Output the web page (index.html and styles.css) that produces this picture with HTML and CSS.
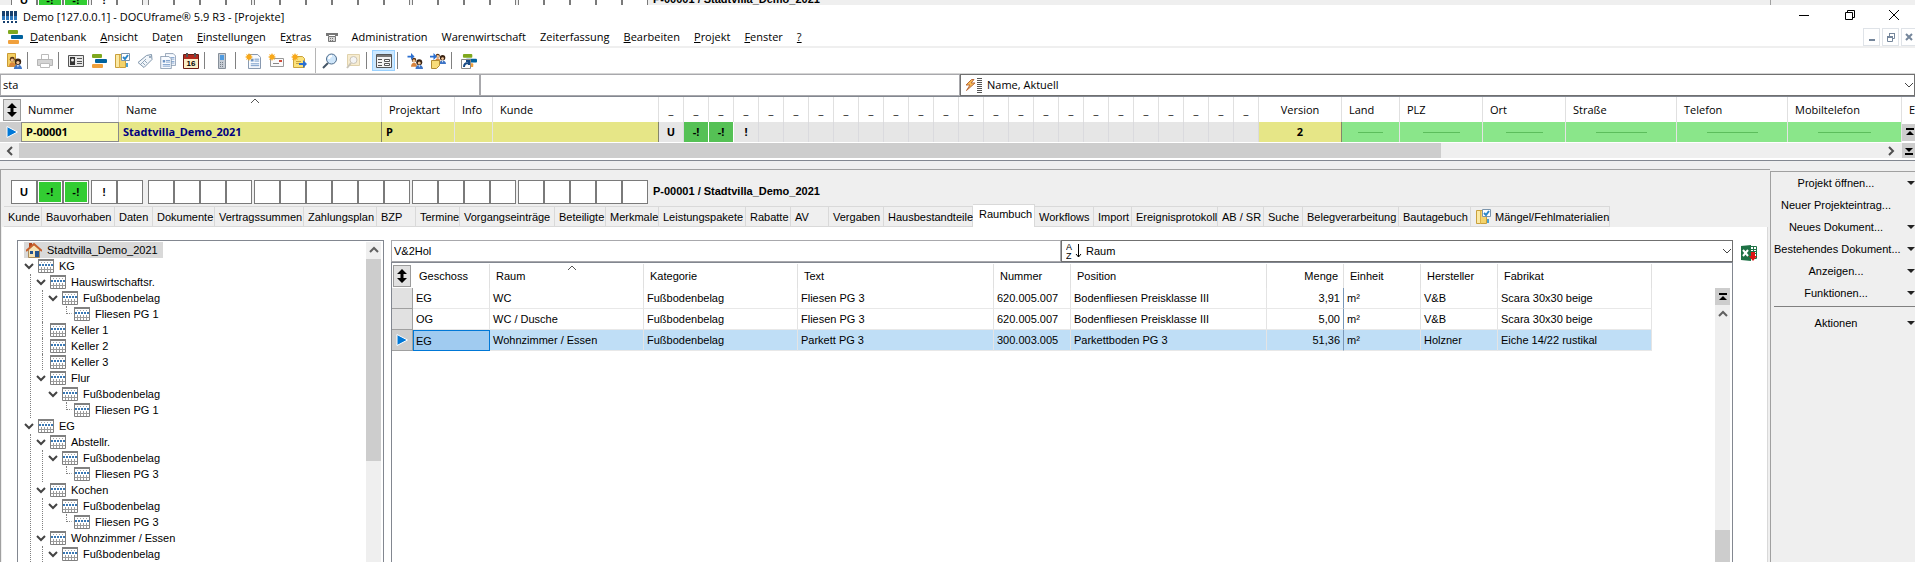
FILE: index.html
```
<!DOCTYPE html>
<html lang="de">
<head>
  <meta charset="UTF-8" />
  <meta name="viewport" content="width=device-width, initial-scale=1.0" />
  <title>Demo [127.0.0.1] - DOCUframe® 5.9 R3 - [Projekte]</title>
  <link rel="stylesheet" href="styles.css">
</head>
<body>
  <svg class="defs" aria-hidden="true">
    <symbol id="i-grid" viewBox="0 0 16 14">
      <path fill="#fff" d="M0 0h16v14H0z"/>
      <path fill="none" stroke="#a8a8a8" stroke-dasharray="1 2" d="M3 3.5h12M3 8.5h12"/>
      <path stroke="#3a78b4" stroke-width="2" stroke-dasharray="2 1" d="M1 6h14"/>
      <path fill="none" stroke="#9c9c9c" d="M1 10.5h14M3.500 8v5M6.500 8v5M9.500 8v5M12.500 8v5"/>
      <path fill="none" stroke="#808080" d="M.5 .5h15v13H.5z"/>
      <path fill="#808080" d="M0 0h16v2H0z"/>
    </symbol>
    <symbol id="i-down" viewBox="0 0 10 10"><path fill="none" stroke="#444" stroke-width="2" d="M1 3l4 4 4-4"/></symbol>
    <symbol id="i-up" viewBox="0 0 10 10"><path fill="none" stroke="#606060" stroke-width="2" d="M1 7l4-4 4 4"/></symbol>
    <symbol id="i-left" viewBox="0 0 10 10"><path fill="none" stroke="#505050" stroke-width="2" d="M7 1L3 5l4 4"/></symbol>
    <symbol id="i-right" viewBox="0 0 10 10"><path fill="none" stroke="#505050" stroke-width="2" d="M3 1l4 4-4 4"/></symbol>
    <symbol id="i-combo" viewBox="0 0 10 10"><path fill="none" stroke="#444" d="M1 3l4 4 4-4"/></symbol>
    <symbol id="i-sort" viewBox="0 0 10 6"><path fill="none" stroke="#555" d="M1 5l4-4 4 4"/></symbol>
    <symbol id="i-updown" viewBox="0 0 10 14"><path d="M5 0l5 5H6.500v4H10l-5 5-5-5h3.500V5H0z"/></symbol>
    <symbol id="i-current" viewBox="0 0 12 12"><path fill="#0078d7" stroke="#fff" d="M1 .5L11.500 6 1 11.500z"/></symbol>
    <symbol id="i-first" viewBox="0 0 8 8"><path d="M0 0h8v2H0zM4 3l4 4H0z"/></symbol>
    <symbol id="i-last" viewBox="0 0 8 8"><path d="M0 6h8v2H0zM4 5l4-4H0z"/></symbol>
    <symbol id="i-arrow" viewBox="0 0 8 4"><path fill="#222" d="M0 0h8L4 4z"/></symbol>
    <symbol id="i-bars" viewBox="0 0 16 16">
      <rect x="1" y="1" width="10" height="4" rx="1" fill="#7fa81e"/>
      <rect x="4" y="6" width="12" height="4" rx="1" fill="#00629e"/>
      <rect x="1" y="11" width="11" height="4" rx="1" fill="#f0a03c"/>
    </symbol>
    <symbol id="i-folder" viewBox="0 0 16 16">
      <path fill="#f3d36b" stroke="#c9a03c" d="M1.500 1.500h10v13h-10z"/>
      <path fill="#fbe9a4" d="M2 2h3v12H2z"/>
      <path fill="#dcb048" d="M5 2h1v13H5z"/>
      <path fill="#fff" stroke="#7a94ac" d="M7.500 .5h8v7h-8z"/>
      <path fill="none" stroke="#2a86c8" stroke-width="2" d="M9 4l2 2 3-4"/>
      <path fill="#4da0d0" d="M12 10h2v4h-2z"/>
    </symbol>
    <symbol id="i-people" viewBox="0 0 16 16">
      <circle cx="4" cy="4" r="3" fill="#5a3416"/><circle cx="4" cy="5" r="2" fill="#f0bf8c"/>
      <path fill="#d8843c" d="M0 13c0-7 8-7 8 0z"/>
      <circle cx="11" cy="7" r="4" fill="#3b2414"/><circle cx="11" cy="8" r="2" fill="#f4c89a"/>
      <path fill="#3d74c6" d="M6 16c0-7 10-7 10 0z"/><path fill="#fff" d="M10 11h2l-1 3z"/>
    </symbol>
    <symbol id="i-star" viewBox="0 0 8 8"><path fill="#f7a81b" d="M4 0l1 2 2-1-1 2 2 1-2 1 1 2-2-1-1 2-1-2-2 1 1-2-2-1 2-1-1-2 2 1z"/></symbol>
    <symbol id="i-blue" viewBox="0 0 8 8"><path fill="#2b6fd0" d="M0 3h4V0l4 4-4 4V5H0z"/></symbol>
    <symbol id="i-doc" viewBox="0 0 14 16">
      <path fill="#f8fbff" stroke="#7a8ea6" d="M.5 .5h10l3 3v12H.5z"/>
      <path stroke="#6b93c4" d="M7 5.500h5M7 7.500h5M3 10.500h9M3 12.500h9"/><path fill="#6b93c4" d="M3 5h3v3H3z"/>
    </symbol>
  </svg>

  <div class="app">
    <!-- lower edge of the window behind -->
    <div class="behind" aria-hidden="true">
      <div class="status">
        <div class="status-group"><span>U</span><span class="on">-!</span><span class="on">-!</span></div>
        <div class="status-group wide-gap"><span>!</span><span></span></div>
        <div class="status-group"><span></span><span></span><span></span><span></span></div>
        <div class="status-group"><span></span><span></span><span></span><span></span><span></span><span></span></div>
        <div class="status-group"><span></span><span></span><span></span><span></span></div>
        <div class="status-group"><span></span><span></span><span></span><span></span><span></span></div>
        <b class="status-title">P-00001 / Stadtvilla_Demo_2021</b>
      </div>
      <div class="behind-side"></div>
    </div>

    <header class="titlebar">
      <svg class="logo" viewBox="0 0 16 12"><path fill="#17406f" d="M0 0h3v8H0zM4 0h3v8H4zM8 0h3v8H8zM12 0h3v8h-3z"/><path fill="#2f78bd" d="M0 5h3v4H0zM4 5h3v4H4zM8 5h3v4H8zM12 5h3v4h-3z"/><path fill="#17406f" d="M1 10h2v2H1zM5 10h2v2H5zM9 10h2v2H9zM13 10h2v2h-2z"/></svg>
      <span class="caption">Demo [127.0.0.1] - DOCUframe® 5.9 R3 - [Projekte]</span>
      <div class="win-buttons">
        <button aria-label="Minimieren"><svg width="10" height="10"><path stroke="#000" d="M0 5.500h10"/></svg></button>
        <button aria-label="Wiederherstellen"><svg width="10" height="10"><path fill="none" stroke="#000" d="M.5 2.500h7v7h-7zM2.500 2.500v-2h7v7h-2"/></svg></button>
        <button aria-label="Schließen"><svg width="10" height="10"><path stroke="#000" d="M0 0l10 10M10 0L0 10"/></svg></button>
      </div>
    </header>

    <nav class="menubar">
      <svg class="menu-icon" width="16" height="16"><use href="#i-bars"/></svg>
      <button><u>D</u>atenbank</button>
      <button><u>A</u>nsicht</button>
      <button>Da<u>t</u>en</button>
      <button><u>E</u>instellungen</button>
      <button>E<u>x</u>tras</button>
      <button aria-label="Telefon"><svg width="12" height="10"><path fill="#777" d="M0 1h12v3H9V3H3v1H0z"/><path fill="#d8d8d8" stroke="#777" d="M2.500 4.500h7v5h-7z"/><path stroke="#777" stroke-dasharray="1 1" d="M4 6.500h4M4 8.500h4"/></svg></button>
      <button>Administration</button>
      <button>Warenwirtschaft</button>
      <button>Zeiterfassung</button>
      <button><u>B</u>earbeiten</button>
      <button><u>P</u>rojekt</button>
      <button><u>F</u>enster</button>
      <button><u>?</u></button>
      <div class="mdi-buttons">
        <button aria-label="Fenster minimieren"><svg width="10" height="10"><path fill="#75869b" d="M2 7h6v2H2z"/></svg></button>
        <button aria-label="Fenster wiederherstellen"><svg width="10" height="10"><path fill="none" stroke="#75869b" d="M1.500 5.500h5v4h-5zM3.500 4V1.500h5v5H7"/><path fill="#75869b" d="M1 4h6v2H1zM3 1h6v1H3z"/></svg></button>
        <button aria-label="Fenster schließen"><svg width="10" height="10"><path stroke="#75869b" stroke-width="2" d="M2 2l6 6M8 2L2 8"/></svg></button>
      </div>
    </nav>

    <div class="toolbar">
      <button aria-label="Anmelden"><svg width="16" height="16"><path fill="#f4cf63" stroke="#c99a35" d="M1.500 .5h8v13h-8z"/><use href="#i-people" x="3" y="3" width="13" height="13"/></svg></button>
      <i class="sep"></i>
      <button aria-label="Drucken" disabled><svg width="16" height="16"><path fill="#fff" stroke="#bbb" d="M4.500 1.500h7v5h-7z"/><path fill="#d4d4d4" stroke="#b5b5b5" d="M.5 6.500h15v6H.5z"/><path fill="#fff" stroke="#bbb" d="M3.500 10.500h9v4h-9z"/></svg></button>
      <i class="sep"></i>
      <button aria-label="Adressen"><svg width="16" height="16"><path fill="#e8e8e8" stroke="#555" d="M.5 2.500h15v11H.5z"/><path fill="#333" d="M2 4h5v8H2z"/><circle cx="4.500" cy="7" r="1.500" fill="#eee"/><path stroke="#555" d="M9 5.500h5M9 8.500h5M9 10.500h5"/></svg></button>
      <button aria-label="Projekte"><svg width="16" height="16"><use href="#i-bars"/></svg></button>
      <button aria-label="Vorgänge"><svg width="16" height="16"><use href="#i-folder"/></svg></button>
      <button aria-label="Artikel"><svg width="16" height="16"><path fill="#f2f6fa" stroke="#7f95ab" d="M9.500 2.500l5-1 .5 5-8 8-6-5z"/><circle cx="13" cy="4" r="1" fill="#7f95ab"/><path fill="none" stroke="#90a5ba" d="M5 9l3 3M7 7l3 3M4 11l5-5"/></svg></button>
      <button aria-label="Dokumente"><svg width="16" height="16"><use href="#i-doc" x="5" y="0" width="11" height="13"/><use href="#i-doc" x="0" y="3" width="12" height="13"/></svg></button>
      <button aria-label="Kalender"><svg width="16" height="16"><path fill="#fbeec8" stroke="#6b1c12" d="M.5 1.500h15v14H.5z"/><path fill="#b32a1e" d="M1 2h14v4H1z"/><path fill="#555" d="M3 0h2v4H3zM11 0h2v4h-2z"/><text x="8" y="13" text-anchor="middle" font-size="8" font-weight="bold">16</text></svg></button>
      <i class="sep"></i>
      <button aria-label="Telefonie"><svg width="16" height="16"><path fill="#c6ccd4" stroke="#87909a" d="M4.500 .5h7v15h-7z"/><path fill="#4f9be0" d="M6 2h4v5H6z"/><path stroke="#77808a" stroke-dasharray="1 1" d="M6 9.500h4M6 11.500h4M6 13.500h4"/></svg></button>
      <i class="sep"></i>
      <button aria-label="Neues Dokument"><svg width="16" height="16"><use href="#i-doc" x="3" y="1" width="13" height="15"/><use href="#i-star" x="0" y="0" width="8" height="8"/></svg></button>
      <button aria-label="Neue E-Mail"><svg width="16" height="16"><path fill="#fafafa" stroke="#999" d="M2.500 5.500h13v8h-13z"/><path fill="#d24a3a" d="M11 7h3v2h-3z"/><path stroke="#888" d="M5 10.500h6"/><use href="#i-star" x="0" y="0" width="8" height="8"/></svg></button>
      <button aria-label="Neue Notiz"><svg width="16" height="16"><path fill="#fbe27c" stroke="#caa23c" d="M2.500 3.500h9l2 2v9h-11z"/><path stroke="#caa23c" d="M5 8.500h5M5 10.500h4"/><use href="#i-star" x="0" y="0" width="8" height="8"/><use href="#i-blue" x="8" y="7" width="8" height="8"/></svg></button>
      <i class="band"></i>
      <button aria-label="Suchen"><svg width="16" height="16"><path stroke="#456" stroke-width="2" d="M6 10l-5 5"/><circle cx="9.500" cy="6" r="5" fill="#cfe6fa" stroke="#4e6c8c"/><path fill="none" stroke="#fff" stroke-width="2" d="M7 6c0-2 1-3 3-3"/></svg></button>
      <button aria-label="Weitersuchen" disabled><svg width="16" height="16"><path fill="#f7ecd0" stroke="#e0d2ac" d="M2.500 1.500h12v11h-12z"/><path stroke="#c9c4b8" stroke-width="2" d="M6 10l-4 5"/><circle cx="8.500" cy="7" r="3.500" fill="#f4f4f4" stroke="#c9c4b8"/></svg></button>
      <i class="sep"></i>
      <button class="pressed" aria-label="Detailansicht" aria-pressed="true"><svg width="16" height="16"><path fill="#f4f4f4" stroke="#555" d="M.5 1.500h15v13H.5z"/><path fill="#777" d="M1 2h14v2H1z"/><path stroke="#555" d="M2 6.500h4M2 9.500h4M2 12.500h4"/><path fill="#fff" stroke="#555" d="M8.500 6.500h5v2h-5zM8.500 10.500h5v2h-5z"/></svg></button>
      <i class="sep"></i>
      <button aria-label="Zuweisen"><svg width="16" height="16"><use href="#i-people" x="4" y="4" width="12" height="12"/><use href="#i-blue" x="0" y="0" width="8" height="7"/></svg></button>
      <button aria-label="Notiz zuweisen"><svg width="16" height="16"><use href="#i-people" x="5" y="0" width="11" height="11"/><path fill="#f8dc7a" stroke="#b28c34" d="M1.500 7.500h8v5l-3 3h-5z"/><use href="#i-blue" x="0" y="0" width="7" height="7"/></svg></button>
      <i class="sep"></i>
      <button aria-label="Verknüpfung"><svg width="16" height="16"><use href="#i-bars" x="1" y="0" width="15" height="15"/><path fill="#fff" stroke="#888" d="M.5 6.500h9v9h-9z"/><path fill="none" stroke="#174a86" stroke-width="2" d="M3 14c0-3 1-4 4-4M5 8h3v4"/></svg></button>
    </div>

    <div class="filter">
      <input type="text" aria-label="Suchbegriff" value="sta">
      <input type="text" aria-label="Suchbegriff 2">
      <label class="combo">
        <svg width="18" height="16"><path fill="#f8bd54" stroke="#b96a3c" d="M6.500 2.500L1 8h4l-3.500 5.500L10 6H6l3-3.500z"/><path stroke="#555" d="M12 1.500h5M12 3.500h5M12 5.500h5M12 7.500h5M12 9.500h5M12 11.500h5M12 13.500h5M12 15.500h5"/></svg>
        <select aria-label="Sortierung"><option>Name, Aktuell</option></select>
        <svg width="10" height="10"><use href="#i-combo"/></svg>
      </label>
    </div>

    <section class="projects">
      <table>
        <colgroup>
          <col class="w-sel"><col class="w-num"><col class="w-name"><col class="w-art"><col class="w-info"><col class="w-kunde">
          <col class="w-flag" span="24">
          <col class="w-mid"><col class="w-land"><col class="w-mid"><col class="w-mid"><col class="w-wide"><col class="w-wide"><col class="w-mobil"><col>
        </colgroup>
        <thead>
          <tr>
            <th class="sel"><button class="updown" aria-label="Spalten"><svg width="10" height="14"><use href="#i-updown"/></svg></button></th>
            <th>Nummer</th>
            <th class="sorted">Name<svg class="sort" width="10" height="6"><use href="#i-sort"/></svg></th>
            <th>Projektart</th><th>Info</th><th>Kunde</th>
            <th class="c">_</th><th class="c">_</th><th class="c">_</th><th class="c">_</th><th class="c">_</th><th class="c">_</th>
            <th class="c">_</th><th class="c">_</th><th class="c">_</th><th class="c">_</th><th class="c">_</th><th class="c">_</th>
            <th class="c">_</th><th class="c">_</th><th class="c">_</th><th class="c">_</th><th class="c">_</th><th class="c">_</th>
            <th class="c">_</th><th class="c">_</th><th class="c">_</th><th class="c">_</th><th class="c">_</th><th class="c">_</th>
            <th class="c">Version</th><th>Land</th><th>PLZ</th><th>Ort</th><th>Straße</th><th>Telefon</th><th>Mobiltelefon</th><th class="last">E</th>
          </tr>
        </thead>
        <tbody>
          <tr>
            <td class="sel"><svg width="12" height="12"><use href="#i-current"/></svg></td>
            <td class="focus">P-00001</td><td class="y navy dark">Stadtvilla_Demo_2021</td><td class="y">P</td><td class="y"></td><td class="y dark"></td>
            <td class="f">U</td><td class="f on">-!</td><td class="f on">-!</td><td class="f">!</td><td class="f"></td><td class="f"></td>
            <td class="f"></td><td class="f"></td><td class="f"></td><td class="f"></td><td class="f"></td><td class="f"></td>
            <td class="f"></td><td class="f"></td><td class="f"></td><td class="f"></td><td class="f"></td><td class="f"></td>
            <td class="f"></td><td class="f"></td><td class="f"></td><td class="f"></td><td class="f"></td><td class="f"></td>
            <td class="y c dark">2</td>
            <td class="g"><hr></td><td class="g"><hr></td><td class="g"><hr></td><td class="g"><hr></td><td class="g"><hr></td><td class="g"><hr></td>
            <td class="edge"><button class="jump" aria-label="Zum Anfang"><svg width="8" height="8"><use href="#i-first"/></svg></button></td>
          </tr>
        </tbody>
      </table>
      <div class="hscroll">
        <svg width="10" height="10"><use href="#i-left"/></svg>
        <div class="track"><div class="thumb"></div></div>
        <svg width="10" height="10"><use href="#i-right"/></svg>
        <button class="jump" aria-label="Zum Ende"><svg width="8" height="8"><use href="#i-last"/></svg></button>
      </div>
    </section>

    <div class="workspace">
      <main class="detail">
        <div class="status">
          <div class="status-group"><span>U</span><span class="on">-!</span><span class="on">-!</span></div>
          <div class="status-group wide-gap"><span>!</span><span></span></div>
          <div class="status-group"><span></span><span></span><span></span><span></span></div>
          <div class="status-group"><span></span><span></span><span></span><span></span><span></span><span></span></div>
          <div class="status-group"><span></span><span></span><span></span><span></span></div>
          <div class="status-group"><span></span><span></span><span></span><span></span><span></span></div>
          <b class="status-title">P-00001 / Stadtvilla_Demo_2021</b>
        </div>

        <div class="tabs" role="tablist">
          <button role="tab">Kunde</button>
          <button role="tab">Bauvorhaben</button>
          <button role="tab">Daten</button>
          <button role="tab">Dokumente</button>
          <button role="tab">Vertragssummen</button>
          <button role="tab">Zahlungsplan</button>
          <button role="tab">BZP</button>
          <button role="tab">Termine</button>
          <button role="tab">Vorgangseinträge</button>
          <button role="tab">Beteiligte</button>
          <button role="tab">Merkmale</button>
          <button role="tab">Leistungspakete</button>
          <button role="tab">Rabatte</button>
          <button role="tab">AV</button>
          <button role="tab">Vergaben</button>
          <button role="tab">Hausbestandteile</button>
          <button role="tab" class="active" aria-selected="true">Raumbuch</button>
          <button role="tab">Workflows</button>
          <button role="tab">Import</button>
          <button role="tab">Ereignisprotokoll</button>
          <button role="tab">AB / SR</button>
          <button role="tab">Suche</button>
          <button role="tab">Belegverarbeitung</button>
          <button role="tab">Bautagebuch</button>
          <button role="tab"><svg width="16" height="16"><use href="#i-folder"/></svg>Mängel/Fehlmaterialien</button>
        </div>

        <div class="page">
          <div class="tree-box">
            <div class="tree">
              <div class="node root">
                <svg width="16" height="16"><path fill="#b0451c" d="M3 1h3v5H3z"/><path fill="#f6e3b4" stroke="#a88a5c" d="M2.500 7.500L8 2.500l5.500 5v8h-11z"/><path fill="none" stroke="#c8602c" stroke-width="2" d="M0 9l8-7 8 7"/><path fill="#24548e" d="M4 9h3v3H4zM9 9h4v6H9z"/></svg>
                <span>Stadtvilla_Demo_2021</span>
              </div>
              <ul>
                <li>
                  <div class="node"><svg class="toggle"><use href="#i-down"/></svg><svg class="item"><use href="#i-grid"/></svg>KG</div>
                  <ul>
                    <li>
                      <div class="node"><svg class="toggle"><use href="#i-down"/></svg><svg class="item"><use href="#i-grid"/></svg>Hauswirtschaftsr.</div>
                      <ul>
                        <li>
                          <div class="node"><svg class="toggle"><use href="#i-down"/></svg><svg class="item"><use href="#i-grid"/></svg>Fußbodenbelag</div>
                          <ul><li><div class="node"><i class="elbow"></i><svg class="item"><use href="#i-grid"/></svg>Fliesen PG 1</div></li></ul>
                        </li>
                      </ul>
                    </li>
                    <li><div class="node"><i class="elbow through"></i><svg class="item"><use href="#i-grid"/></svg>Keller 1</div></li>
                    <li><div class="node"><i class="elbow through"></i><svg class="item"><use href="#i-grid"/></svg>Keller 2</div></li>
                    <li><div class="node"><i class="elbow through"></i><svg class="item"><use href="#i-grid"/></svg>Keller 3</div></li>
                    <li>
                      <div class="node"><svg class="toggle"><use href="#i-down"/></svg><svg class="item"><use href="#i-grid"/></svg>Flur</div>
                      <ul>
                        <li>
                          <div class="node"><svg class="toggle"><use href="#i-down"/></svg><svg class="item"><use href="#i-grid"/></svg>Fußbodenbelag</div>
                          <ul><li><div class="node"><i class="elbow"></i><svg class="item"><use href="#i-grid"/></svg>Fliesen PG 1</div></li></ul>
                        </li>
                      </ul>
                    </li>
                  </ul>
                </li>
                <li class="more">
                  <div class="node"><svg class="toggle"><use href="#i-down"/></svg><svg class="item"><use href="#i-grid"/></svg>EG</div>
                  <ul>
                    <li>
                      <div class="node"><svg class="toggle"><use href="#i-down"/></svg><svg class="item"><use href="#i-grid"/></svg>Abstellr.</div>
                      <ul>
                        <li>
                          <div class="node"><svg class="toggle"><use href="#i-down"/></svg><svg class="item"><use href="#i-grid"/></svg>Fußbodenbelag</div>
                          <ul><li><div class="node"><i class="elbow"></i><svg class="item"><use href="#i-grid"/></svg>Fliesen PG 3</div></li></ul>
                        </li>
                      </ul>
                    </li>
                    <li>
                      <div class="node"><svg class="toggle"><use href="#i-down"/></svg><svg class="item"><use href="#i-grid"/></svg>Kochen</div>
                      <ul>
                        <li>
                          <div class="node"><svg class="toggle"><use href="#i-down"/></svg><svg class="item"><use href="#i-grid"/></svg>Fußbodenbelag</div>
                          <ul><li><div class="node"><i class="elbow"></i><svg class="item"><use href="#i-grid"/></svg>Fliesen PG 3</div></li></ul>
                        </li>
                      </ul>
                    </li>
                    <li class="more">
                      <div class="node"><svg class="toggle"><use href="#i-down"/></svg><svg class="item"><use href="#i-grid"/></svg>Wohnzimmer / Essen</div>
                      <ul>
                        <li><div class="node"><svg class="toggle"><use href="#i-down"/></svg><svg class="item"><use href="#i-grid"/></svg>Fußbodenbelag</div></li>
                      </ul>
                    </li>
                  </ul>
                </li>
              </ul>
            </div>
            <div class="vscroll">
              <svg width="10" height="10"><use href="#i-up"/></svg>
              <div class="thumb"></div>
            </div>
          </div>

          <div class="rooms">
            <div class="filter">
              <input type="text" aria-label="Raumbuch filtern" value="V&amp;2Hol">
              <label class="combo">
                <svg width="16" height="16"><text x="0" y="7" font-size="9">A</text><text x="0" y="16" font-size="9">Z</text><path fill="none" stroke="#000" d="M12.500 1v13M10 11l2.500 3 2.500-3"/></svg>
                <select aria-label="Raumbuch sortieren"><option>Raum</option></select>
                <svg width="10" height="10"><use href="#i-combo"/></svg>
              </label>
            </div>
            <div class="rooms-grid">
              <table>
                <colgroup>
                  <col class="w-sel"><col class="r-s"><col class="r-l"><col class="r-l"><col class="r-xl"><col class="r-s"><col class="r-xl">
                  <col class="r-s"><col class="r-s"><col class="r-s"><col class="r-l"><col>
                </colgroup>
                <thead>
                  <tr>
                    <th class="sel"><button class="updown" aria-label="Spalten"><svg width="10" height="14"><use href="#i-updown"/></svg></button></th>
                    <th>Geschoss</th>
                    <th class="sorted">Raum<svg class="sort" width="10" height="6"><use href="#i-sort"/></svg></th>
                    <th>Kategorie</th><th>Text</th><th>Nummer</th><th>Position</th><th class="r">Menge</th>
                    <th>Einheit</th><th>Hersteller</th><th>Fabrikat</th><th class="rest"></th>
                  </tr>
                </thead>
                <tbody>
                  <tr>
                    <td class="sel"></td><td>EG</td><td>WC</td><td>Fußbodenbelag</td><td>Fliesen PG 3</td><td>620.005.007</td>
                    <td>Bodenfliesen Preisklasse III</td><td class="r">3,91</td><td>m²</td><td>V&amp;B</td><td>Scara 30x30 beige</td><td class="rest"></td>
                  </tr>
                  <tr>
                    <td class="sel"></td><td>OG</td><td>WC / Dusche</td><td>Fußbodenbelag</td><td>Fliesen PG 3</td><td>620.005.007</td>
                    <td>Bodenfliesen Preisklasse III</td><td class="r">5,00</td><td>m²</td><td>V&amp;B</td><td>Scara 30x30 beige</td><td class="rest"></td>
                  </tr>
                  <tr class="current">
                    <td class="sel"><svg width="12" height="12"><use href="#i-current"/></svg></td><td class="focus">EG</td><td>Wohnzimmer / Essen</td><td>Fußbodenbelag</td><td>Parkett PG 3</td><td>300.003.005</td>
                    <td>Parkettboden PG 3</td><td class="r">51,36</td><td>m²</td><td>Holzner</td><td>Eiche 14/22 rustikal</td><td class="rest"></td>
                  </tr>
                </tbody>
              </table>
              <div class="vscroll">
                <button class="jump" aria-label="Zum Anfang"><svg width="8" height="8"><use href="#i-first"/></svg></button>
                <svg width="10" height="10"><use href="#i-up"/></svg>
                <div class="thumb"></div>
              </div>
            </div>
          </div>

          <button class="excel" aria-label="Nach Excel exportieren"><svg width="16" height="16"><path fill="#fff" stroke="#1e7145" d="M8.500 1.500h7v12h-7z"/><path stroke="#1e7145" d="M10 4.500h5M10 6.500h5M10 8.500h5M12.500 2v10"/><path fill="#1e7145" d="M0 1l10-1v16L0 15z"/><path fill="none" stroke="#fff" stroke-width="2" d="M2 5l5 6M7 5l-5 6"/><path fill="#e01414" d="M10 7h4v4h2l-4 5-4-5h2z"/></svg></button>
        </div>
      </main>

      <aside class="actions">
        <button><span>Projekt öffnen...</span><svg width="8" height="4"><use href="#i-arrow"/></svg></button>
        <button><span>Neuer Projekteintrag...</span></button>
        <button><span>Neues Dokument...</span><svg width="8" height="4"><use href="#i-arrow"/></svg></button>
        <button><span>Bestehendes Dokument...</span><svg width="8" height="4"><use href="#i-arrow"/></svg></button>
        <button><span>Anzeigen...</span><svg width="8" height="4"><use href="#i-arrow"/></svg></button>
        <button><span>Funktionen...</span><svg width="8" height="4"><use href="#i-arrow"/></svg></button>
        <hr>
        <button><span>Aktionen</span><svg width="8" height="4"><use href="#i-arrow"/></svg></button>
      </aside>
    </div>
  </div>
</body>
</html>
```
FILE: styles.css
```
* { margin: 0; padding: 0; box-sizing: border-box; }
:root {
  --ui: "Open Sans", "Noto Sans", sans-serif;
  --arial: "Liberation Sans", Arial, sans-serif;
}
html, body { height: 100%; overflow: hidden; }
body {
  background: #fff;
  color: #000;
  font: 11px/16px var(--arial);
}
button, input, select {
  font: inherit;
  color: inherit;
  background: none;
  border: none;
  border-radius: 0;
  outline: none;
}
svg { display: block; flex: none; }
ul { list-style: none; }
.defs { position: absolute; width: 0; height: 0; }
.app {
  display: flex;
  flex-direction: column;
  height: 100%;
  overflow: hidden;
}
.app > * { flex: none; }

/* window behind */
.behind { display: flex; height: 5px; overflow: hidden; background: #efefef; }
.behind .status { flex: 1; margin-top: -12px; padding-top: 0; height: 24px; }
.behind-side { width: 145px; border-left: 1px solid #a0a0a0; }

/* title + menu */
.titlebar { display: flex; align-items: center; height: 23px; padding-left: 2px; font: 11px/18px var(--ui); }
.logo { width: 16px; height: 12px; margin-right: 5px; }
.win-buttons { display: flex; margin-left: auto; }
.win-buttons button { display: flex; justify-content: center; width: 46px; height: 14px; }
.win-buttons button:last-child { width: 42px; }
.menubar { display: flex; align-items: center; height: 20px; padding-left: 7px; border-bottom: 2px solid #efefef; font: 11px/18px var(--ui); }
.menubar button { padding: 0 7px; }
.mdi-buttons { display: flex; gap: 2px; margin-left: auto; }
.mdi-buttons button { display: flex; align-items: center; justify-content: center; width: 17px; height: 18px; padding: 0; border: 1px solid #dfe3e8; }
.mdi-buttons button:last-child { width: 14px; border-right: none; }

/* toolbar */
.toolbar { display: flex; align-items: center; height: 26px; padding-left: 2px; border-bottom: 1px solid #d5d5d5; }
.toolbar button { display: flex; align-items: center; justify-content: center; width: 23px; height: 21px; }
.toolbar .pressed { background: #cce8ff; border: 1px solid #99d1ff; }
.sep, .band { width: 6px; margin-left: 2px; border-left: 1px solid #808080; }
.sep { height: 17px; }
.band { margin-left: 5px; width: 3px; height: 25px; border-left-color: #b5b5b5; }

/* filter rows */
.filter { display: grid; grid-template-columns: 480px 480px 1fr; height: 22px; font: 11px/18px var(--ui); }
.filter input { min-width: 0; padding: 0 2px; border: 1px solid #a8a8ac; }
.combo { display: flex; align-items: center; padding: 0 0 0 4px; border: 1px solid #707070; overflow: hidden; }
.combo select { flex: 1; min-width: 0; margin-left: 4px; appearance: none; }

/* tables */
table { width: 100%; table-layout: fixed; border-collapse: separate; border-spacing: 0; }
th { font-weight: normal; text-align: left; padding: 0 0 0 6px; border-right: 1px solid #e0e0e0; white-space: nowrap; overflow: hidden; }
td { padding: 0 3px; white-space: nowrap; overflow: hidden; border-right: 1px solid #e4e4e4; }
th.sorted { position: relative; }
.sort { position: absolute; top: 1px; left: 50%; }
.updown { display: flex; align-items: center; justify-content: center; width: 18px; height: 22px; background: #e1e1e1; border: 1px solid #9b9b9b; }
.jump { display: flex; align-items: center; justify-content: center; width: 15px; height: 17px; background: #cdcdcd; }
.c { text-align: center; }
.r { text-align: right; }

.projects { border-top: 1px solid #828790; border-bottom: 1px solid #828790; font: 11px/18px var(--ui); }
.projects th { height: 25px; padding-left: 7px; }
.projects th.c { padding: 0; }
.projects th.last { border: none; }
.projects td { height: 20px; padding: 0 4px; font-weight: bold; }
.projects .sel { padding: 0 0 0 3px; border: none; }
.projects td.sel { padding-left: 6px; background: #cdcdcd; }
.projects .focus { background: #f8f8a9; border: 1px solid #8a8a8a; }
.y { background: #e6e687; }
.navy { color: #000080; }
.projects .dark { border-right-color: #85856a; }
.f { background: #e6e6e6; text-align: center; border-right-color: #dadade; }
.f.on { background: #55c155; border-right-color: #fff; }
.g { background: #8ae68a; }
.g hr { width: 50%; margin: 0 auto; border: none; border-top: 1px solid #5cbe5c; }
.projects .edge { padding: 0; border: none; }
.w-sel { width: 21px; }
.w-num { width: 98px; }
.w-name { width: 263px; }
.w-art { width: 73px; }
.w-info { width: 38px; }
.w-kunde { width: 166px; }
.w-flag { width: 25px; }
.w-mid { width: 83px; }
.w-land { width: 58px; }
.w-wide { width: 111px; }
.w-mobil { width: 114px; }

.hscroll { display: flex; align-items: center; height: 15px; margin: 1px 0 2px; padding-left: 5px; background: #efefef; }
.hscroll .track { flex: 1; margin: 0 8px 0 4px; }
.hscroll .thumb { width: 76.5%; height: 15px; background: #cdcdcd; }
.hscroll .jump { width: 13px; height: 15px; margin-left: 6px; }
.vscroll { display: flex; flex-direction: column; align-items: center; width: 15px; background: #efefef; }
.vscroll .thumb { width: 15px; background: #cdcdcd; }

/* lower part */
.app > .workspace { flex: 1; display: flex; min-height: 0; padding-top: 8px; background: #efefef; }
.detail { flex: 1; display: flex; flex-direction: column; min-width: 0; border-top: 1px solid #a0a0a0; border-left: 1px solid #a0a0a0; }
.status { display: flex; gap: 2px; height: 34px; padding: 10px 0 0 10px; }
.behind .status { padding-left: 11px; }
.status-group { display: flex; height: 24px; }
.status-group.wide-gap { margin-right: 3px; }
.status span { width: 26px; line-height: 22px; text-align: center; font-weight: bold; background: #fff; border: 1px solid #7a7a7a; }
.status .on { background: #32cd32; box-shadow: inset 0 0 0 1px #fff; }
.status-title { margin-left: 3px; line-height: 22px; }

.tabs {
  display: grid;
  grid-template-columns: 38px 73px 38px 62px 89px 73px 39px 44px 95px 51px 53px 87px 45px 38px 55px 89px 62px 59px 38px 86px 46px 39px 96px 72px 139px;
  align-items: end;
  height: 23px;
  padding-left: 3px;
}
.tabs button { display: flex; align-items: center; gap: 4px; height: 21px; padding-left: 4px; white-space: nowrap; border: 1px solid #d9d9d9; border-left: none; }
.tabs .active { height: 23px; padding: 0 0 4px 6px; background: #fff; border-bottom: none; }

.page { flex: 1; display: flex; min-height: 0; margin: 0 2px 0 1px; padding: 13px 10px 0 15px; background: #fff; border-right: 1px solid #d9d9d9; }
.tree-box { display: flex; width: 367px; padding-right: 2px; border: 1px solid #828790; border-bottom: none; overflow: hidden; }
.tree { flex: 1; padding: 1px 0 0 6px; }
.tree-box .vscroll { margin-top: 1px; padding-top: 3px; }
.tree-box .vscroll .thumb { height: 202px; margin-top: 4px; }
.node { display: flex; align-items: center; height: 16px; white-space: nowrap; }
.root { width: max-content; gap: 5px; padding: 0 5px 0 2px; background: #d9d9d9; }
.toggle { width: 10px; height: 10px; margin-right: 4px; }
.item { width: 16px; height: 14px; margin-right: 5px; }
.elbow { width: 8px; height: 8px; margin: 0 0 8px 6px; border-left: 1px dotted #808080; border-bottom: 1px dotted #808080; border-right: 5px solid transparent; }
.elbow.through { border-bottom: none; height: 16px; margin-bottom: 0; }
.tree li > ul { margin-left: 6px; padding-left: 5px; border-left: 1px dotted #808080; }
.tree li:last-child:not(.more) > ul { border-left-color: transparent; }

.rooms { flex: 1; display: flex; flex-direction: column; min-width: 0; margin-left: 7px; }
.rooms .filter { grid-template-columns: 670px 1fr; font: 11px/16px var(--arial); }
.rooms-grid { flex: 1; display: flex; position: relative; min-height: 0; padding-top: 1px; border: 1px solid #828790; border-bottom: none; }
.rooms table { height: max-content; }
.rooms th { height: 24px; }
.rooms td { height: 21px; border-bottom: 1px solid #e8e8e8; }
.rooms .sel { padding: 0 0 0 1px; border-right: none; }
.rooms td.sel { padding-left: 4px; background: #e1e1e1; border-right: 1px solid #a0a0a0; border-bottom-color: #a0a0a0; }
.rooms td.r { border-right-color: #7a98b8; }
.rooms th.r { padding-right: 5px; }
.rooms .rest { border: none; }
.rooms .current td { background: #bfdef6; }
.rooms .current td.sel { background: #cdcdcd; }
.rooms .current td.rest { background: none; }
.rooms .current td.focus { padding-left: 2px; background: #a0cbf0; border: 1px solid #0078d7; }
.r-s { width: 77px; }
.r-l { width: 154px; }
.r-xl { width: 196px; }
/* scrollbar lies over the empty last column */
.rooms-grid .vscroll { position: absolute; top: 25px; right: 2px; bottom: 0; gap: 4px; }
.rooms-grid .thumb { height: 32px; margin-top: auto; }
.excel { align-self: flex-start; margin: 5px 0 0 8px; }

.actions { width: 145px; margin-top: 2px; border-left: 1px solid #a0a0a0; border-top: 1px solid #a0a0a0; }
.actions button { display: flex; align-items: center; width: 100%; height: 22px; padding-left: 3px; }
.actions span { width: 124px; margin-right: 9px; text-align: center; white-space: nowrap; }
.actions hr { margin: 2px 0 5px 3px; border: none; border-top: 1px solid #808080; }
```
